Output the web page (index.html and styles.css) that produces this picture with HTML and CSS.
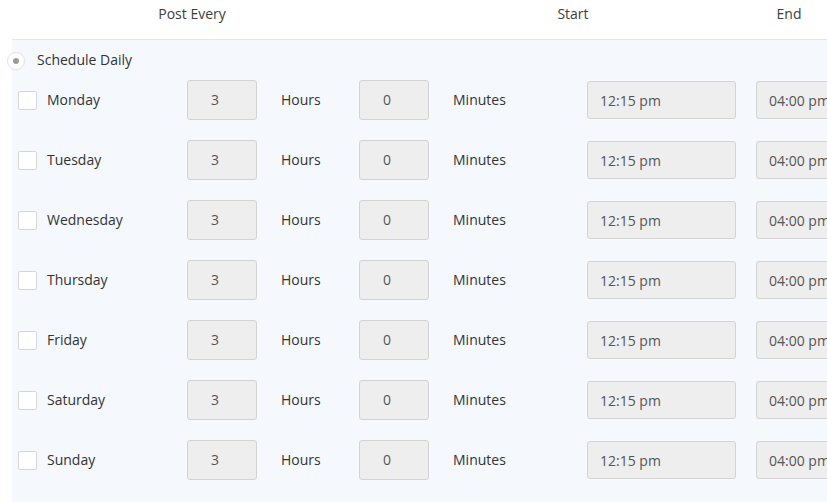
FILE: index.html
```html
<!DOCTYPE html>
<html lang="en">
<head>
<meta charset="utf-8">
<title>Schedule</title>
<link rel="stylesheet" href="styles.css">
</head>
<body>
<div class="schedule">
  <div class="schedule-head">
    <div class="head-cell head-post">Post Every</div>
    <div class="head-cell head-start">Start</div>
    <div class="head-cell head-end">End</div>
  </div>
  <div class="schedule-body">
    <label class="daily">
      <span class="radio"><span class="radio-dot"></span></span>
      <span class="daily-text">Schedule Daily</span>
    </label>
    <div class="days">
      <div class="day-row">
        <span class="check"></span>
        <span class="day-name">Monday</span>
        <span class="field field-num">3</span>
        <span class="unit">Hours</span>
        <span class="field field-num">0</span>
        <span class="unit">Minutes</span>
        <span class="field field-time">12:15 pm</span>
        <span class="field field-time">04:00 pm</span>
      </div>
      <div class="day-row">
        <span class="check"></span>
        <span class="day-name">Tuesday</span>
        <span class="field field-num">3</span>
        <span class="unit">Hours</span>
        <span class="field field-num">0</span>
        <span class="unit">Minutes</span>
        <span class="field field-time">12:15 pm</span>
        <span class="field field-time">04:00 pm</span>
      </div>
      <div class="day-row">
        <span class="check"></span>
        <span class="day-name">Wednesday</span>
        <span class="field field-num">3</span>
        <span class="unit">Hours</span>
        <span class="field field-num">0</span>
        <span class="unit">Minutes</span>
        <span class="field field-time">12:15 pm</span>
        <span class="field field-time">04:00 pm</span>
      </div>
      <div class="day-row">
        <span class="check"></span>
        <span class="day-name">Thursday</span>
        <span class="field field-num">3</span>
        <span class="unit">Hours</span>
        <span class="field field-num">0</span>
        <span class="unit">Minutes</span>
        <span class="field field-time">12:15 pm</span>
        <span class="field field-time">04:00 pm</span>
      </div>
      <div class="day-row">
        <span class="check"></span>
        <span class="day-name">Friday</span>
        <span class="field field-num">3</span>
        <span class="unit">Hours</span>
        <span class="field field-num">0</span>
        <span class="unit">Minutes</span>
        <span class="field field-time">12:15 pm</span>
        <span class="field field-time">04:00 pm</span>
      </div>
      <div class="day-row">
        <span class="check"></span>
        <span class="day-name">Saturday</span>
        <span class="field field-num">3</span>
        <span class="unit">Hours</span>
        <span class="field field-num">0</span>
        <span class="unit">Minutes</span>
        <span class="field field-time">12:15 pm</span>
        <span class="field field-time">04:00 pm</span>
      </div>
      <div class="day-row">
        <span class="check"></span>
        <span class="day-name">Sunday</span>
        <span class="field field-num">3</span>
        <span class="unit">Hours</span>
        <span class="field field-num">0</span>
        <span class="unit">Minutes</span>
        <span class="field field-time">12:15 pm</span>
        <span class="field field-time">04:00 pm</span>
      </div>
    </div>
  </div>
</div>
</body>
</html>
```
FILE: styles.css
```css
html, body {
  margin: 0;
  padding: 0;
  background: #ffffff;
  overflow: hidden;
}

body {
  font-family: "Open Sans", "Noto Sans", sans-serif;
  font-size: 14px;
  color: #333333;
  width: 827px;
  height: 502px;
}

.schedule {
  margin-left: 12px;
  width: 1000px;
  height: 502px;
  display: flex;
  flex-direction: column;
}

/* column titles */
.schedule-head {
  display: flex;
  height: 39px;
  padding-left: 140px;
  border-bottom: 1px solid #e4e7ea;
  box-sizing: content-box;
}

.head-cell {
  width: 80px;
  padding-top: 4px;
  line-height: 20px;
  text-align: center;
  color: #3d3d3d;
}

.head-start { margin-left: 301px; }
.head-end { margin-left: 136px; }

/* tinted area with the rows */
.schedule-body {
  flex: 1;
  background: #f5f9fd;
  padding-left: 6px;
}

.daily {
  display: flex;
  align-items: center;
  height: 40px;
}

.radio {
  width: 16px;
  height: 16px;
  margin-left: -11px;
  margin-top: 1px;
  border: 1px solid #e6e6e6;
  border-radius: 50%;
  background: #ffffff;
  box-shadow: 0 0 1px rgba(0, 0, 0, 0.08);
  display: flex;
  align-items: center;
  justify-content: center;
}

.radio-dot {
  width: 6px;
  height: 6px;
  border-radius: 50%;
  background: #9c9c9c;
}

.daily-text {
  margin-left: 12px;
  padding-bottom: 2px;
  color: #333333;
}

.days {
  display: flex;
  flex-direction: column;
  gap: 20px;
}

.day-row {
  display: grid;
  grid-template-columns: 29px 140px 70px 102px 70px 158px 169px 149px;
  align-items: center;
  height: 40px;
}

.check {
  width: 17px;
  height: 17px;
  border: 1px solid #d6d6d6;
  border-radius: 2px;
  background: #ffffff;
  box-sizing: content-box;
  margin-top: 1px;
}

.day-name {
  padding-bottom: 2px;
  color: #333333;
}

.field {
  height: 38px;
  border: 1px solid #d3d3d3;
  border-radius: 3px;
  background: #eeeeee;
  color: #555555;
  line-height: 38px;
}

.field-num {
  text-align: center;
  padding-right: 14px;
}

.field-time {
  width: 149px;
  padding-left: 12px;
  box-sizing: border-box;
}

.unit {
  padding-left: 24px;
  padding-bottom: 2px;
  color: #333333;
}
```
